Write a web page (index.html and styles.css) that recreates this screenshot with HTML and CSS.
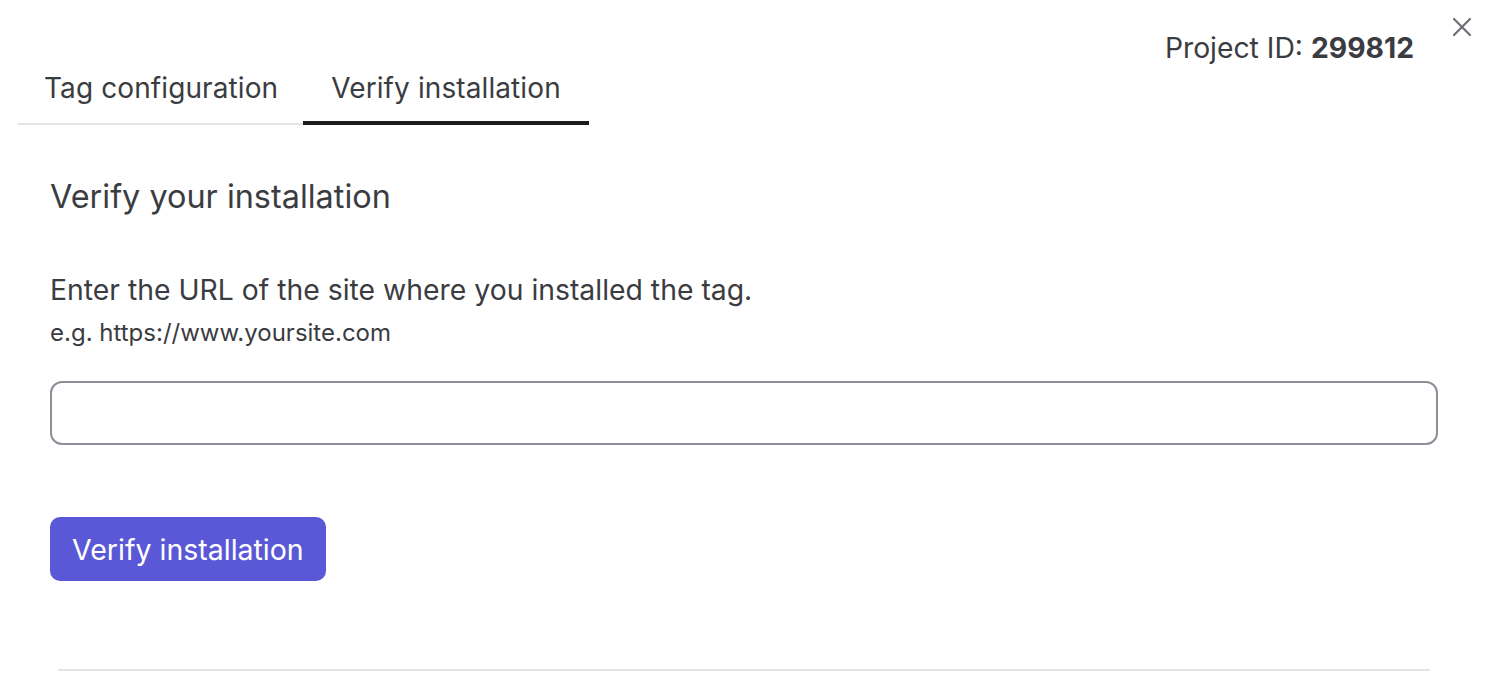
FILE: index.html
```html
<!DOCTYPE html>
<html lang="en">
<head>
<meta charset="utf-8">
<title>Verify installation</title>
<link rel="stylesheet" href="styles.css">
</head>
<body>
<div class="modal">
  <button class="close" aria-label="Close">
    <svg width="20" height="20" viewBox="0 0 20 20"><path d="M2 2L18 18M18 2L2 18" stroke="#6e7076" stroke-width="2.2" stroke-linecap="round" fill="none"/></svg>
  </button>
  <header class="header">
    <nav class="tabs">
      <div class="tab">Tag configuration</div>
      <div class="tab active">Verify installation</div>
    </nav>
    <div class="project">Project ID: <strong>299812</strong></div>
  </header>
  <section class="content">
    <h2 class="title">Verify your installation</h2>
    <p class="lead">Enter the URL of the site where you installed the tag.</p>
    <p class="hint">e.g. https://www.yoursite.com</p>
    <input class="url" type="text" aria-label="Site URL">
    <button class="primary">Verify installation</button>
  </section>
  <div class="footer-line"></div>
</div>
</body>
</html>
```
FILE: styles.css
```css
* { box-sizing: border-box; }
html, body { margin: 0; padding: 0; background: #fff; }
body {
  font-family: Inter, "Noto Sans", sans-serif;
  color: #3b3c41;
}
.modal {
  position: relative;
  width: 1490px;
  height: 686px;
  padding: 0 0 0 18px;
}
.close {
  position: absolute;
  top: 17px;
  left: 1452px;
  width: 20px;
  height: 20px;
  padding: 0;
  border: 0;
  background: none;
}
.close svg { display: block; }
.header {
  display: flex;
  justify-content: space-between;
  align-items: flex-start;
  padding-right: 76px;
}
.tabs {
  display: flex;
  margin-top: 70px;
  border-bottom: 2px solid #e3e3e8;
}
.tab {
  font-size: 28px;
  letter-spacing: 0.1px;
  line-height: 36px;
  padding: 0 25px 15px 26px;
  margin-bottom: -2px;
  border-bottom: 4px solid transparent;
  white-space: nowrap;
}
.tab.active { border-bottom-color: #1c1c1e; padding: 0 28px 15px 28px; }
.project {
  margin-top: 30px;
  font-size: 28.3px;
  line-height: 36px;
}
.project strong { font-weight: 700; }
.content {
  padding: 52px 34px 0 32px;
}
.title {
  margin: 0;
  font-size: 32.4px;
  line-height: 40px;
  font-weight: 400;
}
.lead {
  margin: 55px 0 0;
  font-size: 28.35px;
  line-height: 36px;
}
.hint {
  margin: 10px 0 0;
  font-size: 24px;
  line-height: 30px;
}
.url {
  display: block;
  width: 1388px;
  height: 64px;
  margin-top: 33px;
  border: 2px solid #8b8f98;
  border-radius: 12px;
  font: inherit;
}
.primary {
  display: block;
  margin-top: 72px;
  height: 64px;
  padding: 0 22px;
  border: 0;
  border-radius: 10px;
  background: #5a58d6;
  color: #fff;
  font-family: Inter, "Noto Sans", sans-serif;
  font-size: 28.5px;
}
.footer-line {
  position: absolute;
  left: 58px;
  top: 669px;
  width: 1372px;
  height: 2px;
  background: #e4e4ea;
}
```
